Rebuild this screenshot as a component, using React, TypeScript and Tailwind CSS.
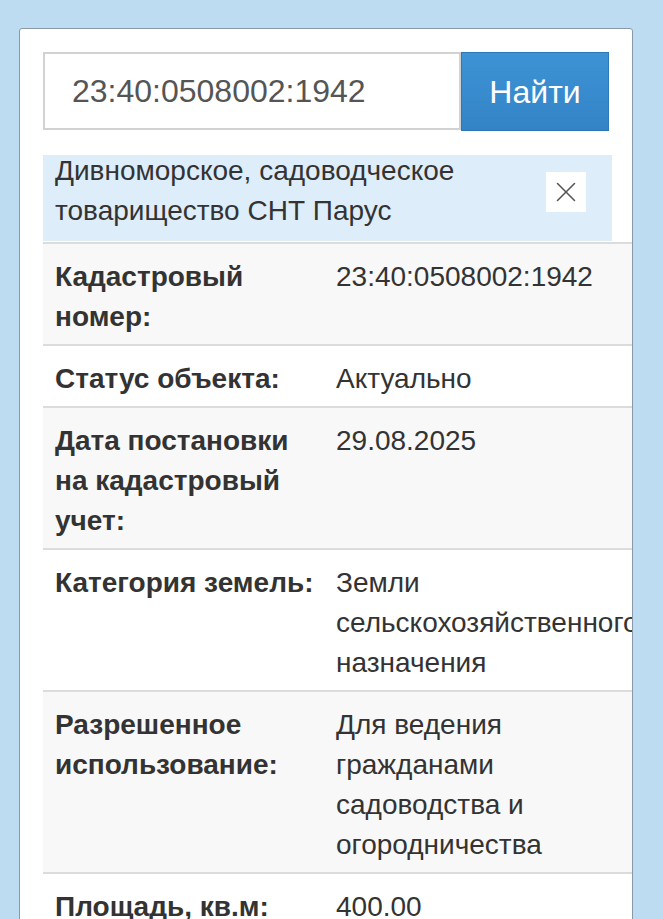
import { X } from 'lucide-react';

type Row = {
  label: string;
  value: string;
};

const rows: Row[] = [
  { label: 'Кадастровый номер:', value: '23:40:0508002:1942' },
  { label: 'Статус объекта:', value: 'Актуально' },
  { label: 'Дата постановки на кадастровый учет:', value: '29.08.2025' },
  { label: 'Категория земель:', value: 'Земли сельскохозяйственного назначения' },
  { label: 'Разрешенное использование:', value: 'Для ведения гражданами садоводства и огородничества' },
  { label: 'Площадь, кв.м:', value: '400.00' },
];

export default function App() {
  return (
    <div
      className="h-[919px] overflow-hidden bg-[#bddcf1] pt-[28px] pl-[19px] pr-[30px] text-[#333]"
      style={{ fontFamily: '"Liberation Sans", Arial, sans-serif' }}
    >
      <div className="h-[900px] overflow-hidden rounded-t-[3px] border border-[#8a99a8] bg-white pt-[23px] pl-[23px]">
        {/* search */}
        <div className="mr-[23px] flex h-[79px]">
          <div className="flex h-[78px] w-[418px] items-center border-2 border-[#d2d2d2] pl-[27px] text-[32px] text-[#555]">
            23:40:0508002:1942
          </div>
          <button className="flex flex-1 items-center justify-center border border-[#2e78b8] bg-gradient-to-b from-[#3d93d5] to-[#3384c7] text-[32px] text-white">
            Найти
          </button>
        </div>

        {/* suggestion */}
        <div className="mt-[24px] mr-[20px] flex h-[86px] items-start justify-between bg-[#deedfa] pl-[12px]">
          <p className="-mt-[4px] text-[28px] leading-[40px] text-[#333]">
            Дивноморское, садоводческое
            <br />
            товарищество СНТ Парус
          </p>
          <div className="mt-[17px] mr-[26px] flex h-[40px] w-[40px] items-center justify-center bg-white">
            <X size={34} strokeWidth={1.1} color="#555" />
          </div>
        </div>

        {/* details */}
        <div className="mt-[1px] text-[28px] leading-[40px]">
          {rows.map((row, i) => (
            <div
              key={row.label}
              className={`flex border-t-2 border-[#dcdcdc] pt-[13px] pb-[7px] pl-[12px] ${i % 2 === 0 ? 'bg-[#f8f8f8]' : 'bg-white'}`}
            >
              <div className="w-[262px] shrink-0 font-bold">{row.label}</div>
              <div className="ml-[19px]">{row.value}</div>
            </div>
          ))}
        </div>
      </div>
    </div>
  );
}
